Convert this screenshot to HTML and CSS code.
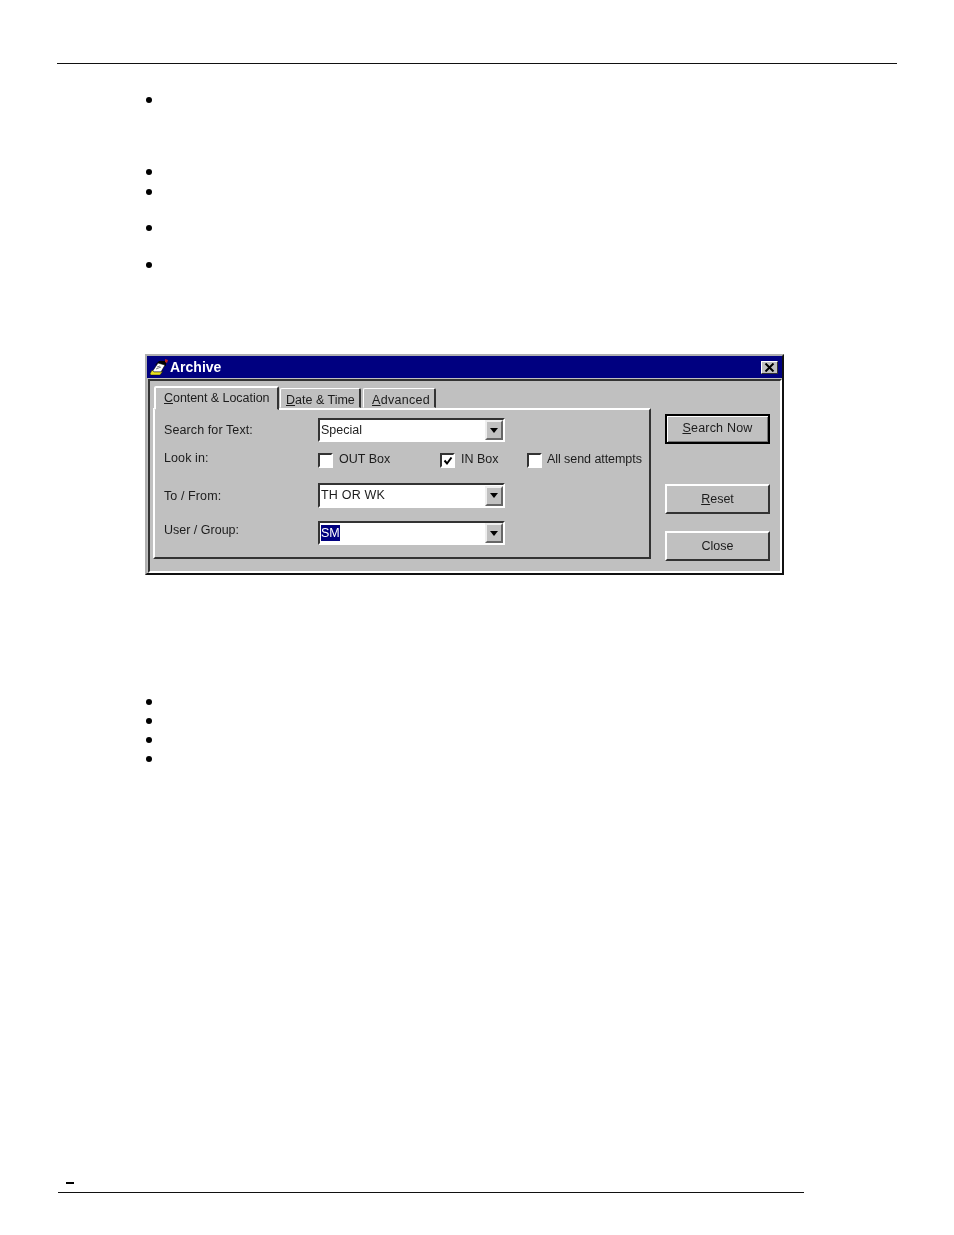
FILE: index.html
```html
<!DOCTYPE html>
<html lang="en">
<head>
    <meta charset="UTF-8">
    <title>Archive</title>
    <link rel="stylesheet" href="styles.css">
</head>
<body>
    <hr class="top-rule">
    <ul class="bullets first">
        <li></li>
        <li class="gap-72"></li>
        <li class="gap-20"></li>
        <li class="gap-36"></li>
        <li class="gap-37"></li>
    </ul>
    <main class="dialog">
        <header class="titlebar">
            <svg class="app-icon" width="19" height="17" viewBox="0 0 19 17">
                <path d="M5 6 L9 2 L16 2 L16 7 L9 5 Z" fill="#000"/>
                <path d="M2 13 L8 4 L15 6 L11 13 Z" fill="#fff" stroke="#000" stroke-width="0.6"/>
                <path d="M15 0 L18 1 L17 4 L15 3 Z" fill="#c02020"/>
                <path d="M0 15 L2 11 L4 13 L11 13 L13 12 L10 16 L1 16 Z" fill="#e8e020" stroke="#000" stroke-width="0.4"/>
                <path d="M6 10 L11 8 M7 8 L10 7" stroke="#808080" stroke-width="1"/>
            </svg>
            <span class="title">Archive</span>
            <span class="close-box">
                <svg width="11" height="9" viewBox="0 0 11 9">
                    <path d="M1.5 0.5 L9.5 8.5 M9.5 0.5 L1.5 8.5" stroke="#000" stroke-width="2"/>
                </svg>
            </span>
        </header>
        <div class="client">
            <section class="tabs-col">
                <div class="tabs">
                    <div class="tab active"><u>C</u>ontent &amp; Location</div>
                    <div class="tab date"><u>D</u>ate &amp; Time</div>
                    <div class="tab adv"><u>A</u>dvanced</div>
                </div>
                <div class="pane">
                    <div class="lbl">Search for Text:</div>
                    <div class="combo">
                        <span class="combo-text">Special</span>
                        <span class="arrow"></span>
                    </div>

                    <div class="lbl look">Look in:</div>
                    <div class="checks">
                        <label class="check out"><span class="box"></span>OUT Box</label>
                        <label class="check in">
                            <span class="box">
                                <svg width="10" height="10" viewBox="0 0 10 10">
                                    <path d="M1.5 4.5 L4 7.5 L8.5 1.5" fill="none" stroke="#000" stroke-width="2"/>
                                </svg>
                            </span>IN Box
                        </label>
                        <label class="check all"><span class="box"></span>All send attempts</label>
                    </div>

                    <div class="lbl">To / From:</div>
                    <div class="combo tall">
                        <span class="combo-text wide">TH OR WK</span>
                        <span class="arrow"></span>
                    </div>

                    <div class="lbl user">User / Group:</div>
                    <div class="combo user-combo">
                        <span class="combo-text"><span class="selected">SM</span></span>
                        <span class="arrow"></span>
                    </div>
                </div>
            </section>
            <aside class="buttons">
                <button class="btn default"><u>S</u>earch Now</button>
                <button class="btn reset"><u>R</u>eset</button>
                <button class="btn close">Close</button>
            </aside>
        </div>
    </main>
    <ul class="bullets second">
        <li></li>
        <li class="gap-19"></li>
        <li class="gap-19"></li>
        <li class="gap-19"></li>
    </ul>
    <footer class="foot">
        <div class="dash"></div>
        <hr class="foot-rule">
    </footer>
</body>
</html>
```

FILE: styles.css
```css
body {
    margin: 0;
    background: #fff;
    height: 1235px;
    overflow: hidden;
    font-family: "Liberation Sans", Arial, sans-serif;
}
.top-rule {
    margin: 63px 0 0 57px;
    width: 840px;
    height: 1px;
    border: none;
    background: #111;
}

/* bullets, the text next to them is empty */
.bullets {
    list-style: none;
    margin: 0 0 0 146px;
    padding: 0;
}
.bullets.first { margin-top: 33px; }
.bullets.second { margin-top: 124px; }
.bullets li {
    width: 6px;
    height: 6px;
    border-radius: 50%;
    background: #000;
}
.bullets .gap-19 { margin-top: 13px; }
.bullets .gap-20 { margin-top: 14px; }
.bullets .gap-36 { margin-top: 30px; }
.bullets .gap-37 { margin-top: 31px; }
.bullets .gap-72 { margin-top: 66px; }

/* dialog */
.dialog {
    box-sizing: border-box;
    width: 639px;
    height: 221px;
    margin: 86px 0 0 145px;
    background: #c0c0c0;
    border: 2px solid;
    border-color: #b0b0b0 #111 #111 #b0b0b0;
    color: #1c1c1c;
    font-size: 12.5px;
    filter: blur(0.4px);
}
.titlebar {
    height: 22px;
    background: #000080;
    display: flex;
    align-items: center;
    padding-left: 3px;
}
.app-icon { flex: none; }
.title {
    margin-left: 1px;
    color: #fff;
    font-weight: bold;
    font-size: 14px;
}
.close-box {
    margin-left: auto;
    margin-right: 4px;
    width: 17px;
    height: 13px;
    box-sizing: border-box;
    display: flex;
    align-items: center;
    justify-content: center;
    background: #c0c0c0;
    border: 1px solid;
    border-color: #fff #333 #333 #fff;
}
.client {
    box-sizing: border-box;
    height: 194px;
    margin: 1px 0 0 1px;
    border: 2px solid;
    border-color: #333 #fff #fff #333;
    display: flex;
}
.tabs-col {
    margin: 5px 0 0 3px;
    width: 498px;
}
.tabs {
    display: flex;
    align-items: flex-end;
    height: 22px;
    margin-left: 1px;
}
.tab {
    box-sizing: border-box;
    height: 20px;
    border: 1px solid;
    border-color: #fff #333 transparent #fff;
    border-right-width: 2px;
    border-radius: 2px 2px 0 0;
    white-space: nowrap;
    line-height: 22px;
}
.tab.active {
    position: relative;
    z-index: 1;
    width: 125px;
    height: 24px;
    margin-bottom: -2px;
    padding-left: 8px;
    background: #c0c0c0;
    border-left-width: 2px;
    border-top-width: 2px;
    line-height: 21px;
    letter-spacing: -0.05px;
}
.tab.date {
    width: 81px;
    margin-left: 1px;
    padding-left: 5px;
}
.tab.adv {
    width: 73px;
    margin-left: 2px;
    padding-left: 8px;
    letter-spacing: 0.3px;
}
.pane {
    box-sizing: border-box;
    height: 151px;
    padding: 8px 0 0 9px;
    border: 2px solid;
    border-color: #fff #333 #333 #fff;
    display: grid;
    grid-template-columns: 154px 1fr;
    grid-template-rows: 24px 41px 25px 37px;
    align-items: center;
}
.lbl {
    white-space: nowrap;
    letter-spacing: 0.1px;
}
.lbl.look {
    align-self: start;
    padding-top: 9px;
}
.lbl.user {
    align-self: end;
    padding-bottom: 8px;
    letter-spacing: 0;
}
.combo {
    box-sizing: border-box;
    width: 187px;
    height: 24px;
    padding-left: 1px;
    background: #fff;
    border: 2px solid;
    border-color: #333 #fff #fff #333;
    display: flex;
    align-items: center;
    justify-content: space-between;
}
.combo-text { padding-bottom: 1px; }
.combo-text.wide { letter-spacing: 0.2px; }
.combo.tall { height: 25px; }
.combo.user-combo { align-self: end; }
.selected {
    background: #000080;
    color: #fff;
    padding: 1px 0;
}
.arrow {
    box-sizing: border-box;
    width: 18px;
    height: 20px;
    background: #c0c0c0;
    border: 2px solid;
    border-color: #eee #666 #666 #eee;
    display: flex;
    align-items: center;
    justify-content: center;
}
.arrow::after {
    content: "";
    border: 4px solid transparent;
    border-top: 5px solid #000;
    border-bottom: none;
}
.checks {
    display: flex;
    align-self: start;
    margin-top: 11px;
}
.check {
    display: flex;
    align-items: flex-start;
    line-height: 13px;
    white-space: nowrap;
}
.check.out { width: 122px; }
.check.in { width: 87px; }
.check.all { letter-spacing: -0.06px; }
.box {
    box-sizing: border-box;
    flex: none;
    width: 15px;
    height: 15px;
    margin-right: 6px;
    background: #fff;
    border: 2px solid;
    border-color: #333 #fff #fff #333;
    display: flex;
    align-items: center;
    justify-content: center;
}
.check.all .box { margin-right: 5px; }
.buttons {
    display: flex;
    flex-direction: column;
    margin: 33px 0 0 14px;
}
.btn {
    box-sizing: border-box;
    width: 105px;
    height: 30px;
    padding: 0;
    background: #c0c0c0;
    color: inherit;
    font: inherit;
    border: 2px solid;
    border-color: #fff #333 #333 #fff;
}
.btn.default {
    padding-bottom: 2px;
    letter-spacing: 0.2px;
    border: 2px solid #000;
    box-shadow: inset 1px 1px 0 #fff, inset -1px -1px 0 #777;
}
.btn.reset { margin-top: 40px; }
.btn.close {
    margin-top: 17px;
    padding-bottom: 1px;
}

/* footer */
.foot { margin: 420px 0 0 58px; }
.dash {
    width: 8px;
    height: 2px;
    margin-left: 8px;
    background: #000;
}
.foot-rule {
    margin: 8px 0 0;
    width: 746px;
    height: 1px;
    border: none;
    background: #111;
}
```
